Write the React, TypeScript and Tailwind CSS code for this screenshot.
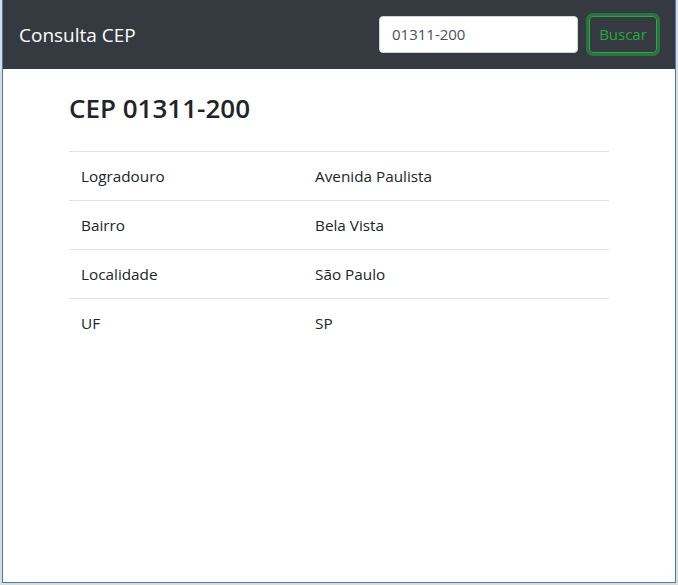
export default function App() {
  const rows: [string, string][] = [
    ["Logradouro", "Avenida Paulista"],
    ["Bairro", "Bela Vista"],
    ["Localidade", "São Paulo"],
    ["UF", "SP"],
  ];
  return (
    <div
      className="w-[678px] h-[585px] bg-[#dcdcdc] overflow-hidden"
      style={{ fontFamily: '"Open Sans", "Noto Sans", sans-serif' }}
    >
      <div className="ml-[2px] w-[674px] h-[583px] border-l border-r border-b border-[#3b7fb6] bg-white flex flex-col">
        <nav className="h-[69px] bg-[#343a40] flex items-center justify-between pl-[16px] pr-[18px]">
          <span className="text-white text-[19px] leading-none pt-[2px]">Consulta CEP</span>
          <div className="flex items-center gap-[11px]">
            <div className="w-[199px] h-[37px] bg-white rounded-[4px] border border-[#ced4da] flex items-center px-[12px] text-[15px] text-[#495057]">
              01311-200
            </div>
            <div className="h-[37px] w-[68px] justify-center rounded-[4px] border border-[#28a745] text-[#28a745] text-[15px] flex items-center shadow-[0_0_0_3px_rgba(40,167,69,0.5)]">
              Buscar
            </div>
          </div>
        </nav>
        <div className="w-[540px] mx-auto pt-[20px]">
          <h2 className="text-[26px] font-semibold text-[#212529] leading-[38px] mb-[24px]">CEP 01311-200</h2>
          <div className="text-[15.3px] text-[#212529]">
            {rows.map(([k, v]) => (
              <div key={k} className="flex border-t border-[#dee2e6] h-[49px] items-center pt-[1px]">
                <div className="w-[234px] px-[12px]">{k}</div>
                <div className="flex-1 px-[12px]">{v}</div>
              </div>
            ))}
          </div>
        </div>
      </div>
    </div>
  );
}
